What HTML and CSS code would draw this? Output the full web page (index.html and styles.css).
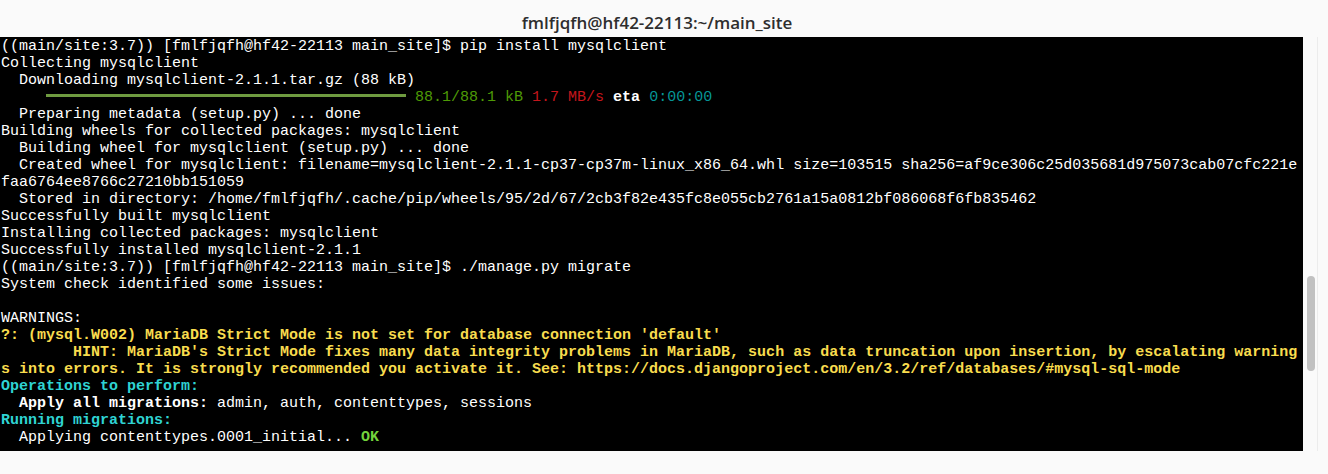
FILE: index.html
```html
<!DOCTYPE html>
<html>
<head>
<meta charset="utf-8">
<link rel="stylesheet" href="styles.css">
</head>
<body>
<div class="window">
  <header class="titlebar"><span class="title">fmlfjqfh@hf42-22113:~/main_site</span></header>
  <div class="body">
    <div class="term">
<div class="ln">((main/site:3.7)) [fmlfjqfh@hf42-22113 main_site]$ pip install mysqlclient</div>
<div class="ln">Collecting mysqlclient</div>
<div class="ln">  Downloading mysqlclient-2.1.1.tar.gz (88 kB)</div>
<div class="ln">     <span class="bar"></span> <span class="g">88.1/88.1 kB</span> <span class="r">1.7 MB/s</span> <b>eta</b> <span class="t">0:00:00</span></div>
<div class="ln">  Preparing metadata (setup.py) ... done</div>
<div class="ln">Building wheels for collected packages: mysqlclient</div>
<div class="ln">  Building wheel for mysqlclient (setup.py) ... done</div>
<div class="ln">  Created wheel for mysqlclient: filename=mysqlclient-2.1.1-cp37-cp37m-linux_x86_64.whl size=103515 sha256=af9ce306c25d035681d975073cab07cfc221e</div>
<div class="ln">faa6764ee8766c27210bb151059</div>
<div class="ln">  Stored in directory: /home/fmlfjqfh/.cache/pip/wheels/95/2d/67/2cb3f82e435fc8e055cb2761a15a0812bf086068f6fb835462</div>
<div class="ln">Successfully built mysqlclient</div>
<div class="ln">Installing collected packages: mysqlclient</div>
<div class="ln">Successfully installed mysqlclient-2.1.1</div>
<div class="ln">((main/site:3.7)) [fmlfjqfh@hf42-22113 main_site]$ ./manage.py migrate</div>
<div class="ln">System check identified some issues:</div>
<div class="ln"> </div>
<div class="ln">WARNINGS:</div>
<div class="ln y">?: (mysql.W002) MariaDB Strict Mode is not set for database connection 'default'</div>
<div class="ln y">        HINT: MariaDB's Strict Mode fixes many data integrity problems in MariaDB, such as data truncation upon insertion, by escalating warning</div>
<div class="ln y">s into errors. It is strongly recommended you activate it. See: https://docs.djangoproject.com/en/3.2/ref/databases/#mysql-sql-mode</div>
<div class="ln c">Operations to perform:</div>
<div class="ln">  <b>Apply all migrations:</b> admin, auth, contenttypes, sessions</div>
<div class="ln c">Running migrations:</div>
<div class="ln">  Applying contenttypes.0001_initial... <span class="ok">OK</span></div>
    </div>
    <div class="gutter"><div class="thumb"></div></div>
  </div>
  <div class="footer"></div>
</div>
</body>
</html>
```
FILE: styles.css
```css
html, body {
  margin: 0;
  padding: 0;
  background: #fafafa;
}
.window {
  width: 1328px;
  height: 474px;
  display: flex;
  flex-direction: column;
  overflow: hidden;
}
.titlebar {
  height: 37px;
  flex: 0 0 37px;
  display: flex;
  align-items: center;
  justify-content: center;
  background: #fafafa;
  padding-right: 14px;
  box-sizing: border-box;
}
.title {
  font-family: "Open Sans", "Noto Sans", sans-serif;
  font-weight: 600;
  font-size: 17px;
  color: #2e2e2e;
  padding-top: 7px;
}
.body {
  display: flex;
  height: 414px;
  flex: 0 0 414px;
}
.term {
  width: 1303px;
  flex: 0 0 1303px;
  background: #000;
  color: #fff;
  font-family: "Liberation Mono", "Courier New", monospace;
  font-size: 15px;
  line-height: 17px;
  padding-left: 1px;
  padding-top: 1px;
  box-sizing: border-box;
  overflow: hidden;
}
.ln {
  white-space: pre;
  height: 17px;
}
.ln b { font-weight: bold; }
.bar {
  display: inline-block;
  width: 360px;
  height: 3px;
  background: #6f9b40;
  vertical-align: 4px;
}
.g { color: #4e9a06; }
.r { color: #c4161c; }
.t { color: #069597; }
.y { color: #f8dc4e; font-weight: bold; }
.c { color: #2fd3d3; font-weight: bold; }
.ok { color: #73d23c; font-weight: bold; }
.gutter {
  flex: 1;
  background: #fafafa;
  border-right: 1px solid #ececec;
  margin-right: 10px;
  padding-left: 4px;
}
.thumb {
  width: 8px;
  height: 95px;
  margin-top: 239px;
  background: #c1c1c1;
  border-radius: 4px;
}
.footer {
  flex: 1;
  background: #fafafa;
}
```
